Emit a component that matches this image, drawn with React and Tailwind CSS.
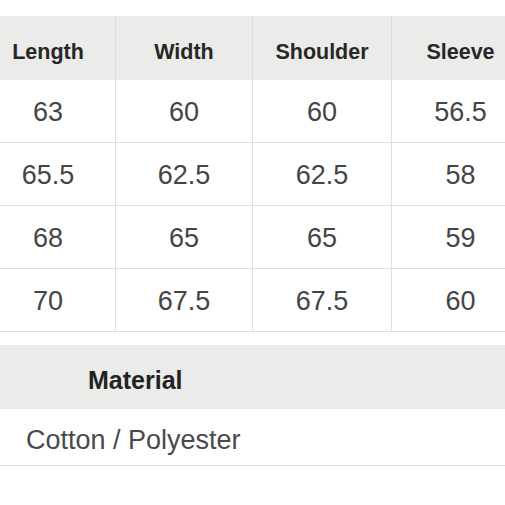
export default function App() {
  const headers = ["Length", "Width", "Shoulder", "Sleeve"];
  const rows = [
    ["63", "60", "60", "56.5"],
    ["65.5", "62.5", "62.5", "58"],
    ["68", "65", "65", "59"],
    ["70", "67.5", "67.5", "60"],
  ];

  return (
    <div
      className="w-[505px] h-[505px] bg-white overflow-hidden pt-[16px]"
      style={{ fontFamily: '"Liberation Sans", Arial, sans-serif' }}
    >
      {/* size table */}
      <div className="-ml-[19px] w-[549px] grid grid-cols-[135px_137px_139px_138px]">
        {headers.map((h) => (
          <div
            key={h}
            className="h-[64px] flex items-center justify-center pt-[8px] bg-[#ebebea] border-r border-[#dcdcdc] text-[21.5px] font-bold text-[#272727]"
          >
            {h}
          </div>
        ))}
        {rows.map((row, i) =>
          row.map((v, j) => (
            <div
              key={`${i}-${j}`}
              className="h-[63px] flex items-center justify-center pt-[3px] border-r border-b border-[#e0e0e0] text-[27px] text-[#454545]"
            >
              {v}
            </div>
          ))
        )}
      </div>

      {/* material */}
      <div className="mt-[13px]">
        <div className="h-[64px] bg-[#ebebea] flex items-center pl-[88px] pt-[8px] text-[25px] font-bold text-[#222]">
          Material
        </div>
        <div className="h-[57px] flex items-center pl-[26px] pt-[6px] border-b border-[#e0e0e0] text-[27px] text-[#4a4a4a]">
          Cotton / Polyester
        </div>
      </div>
    </div>
  );
}
